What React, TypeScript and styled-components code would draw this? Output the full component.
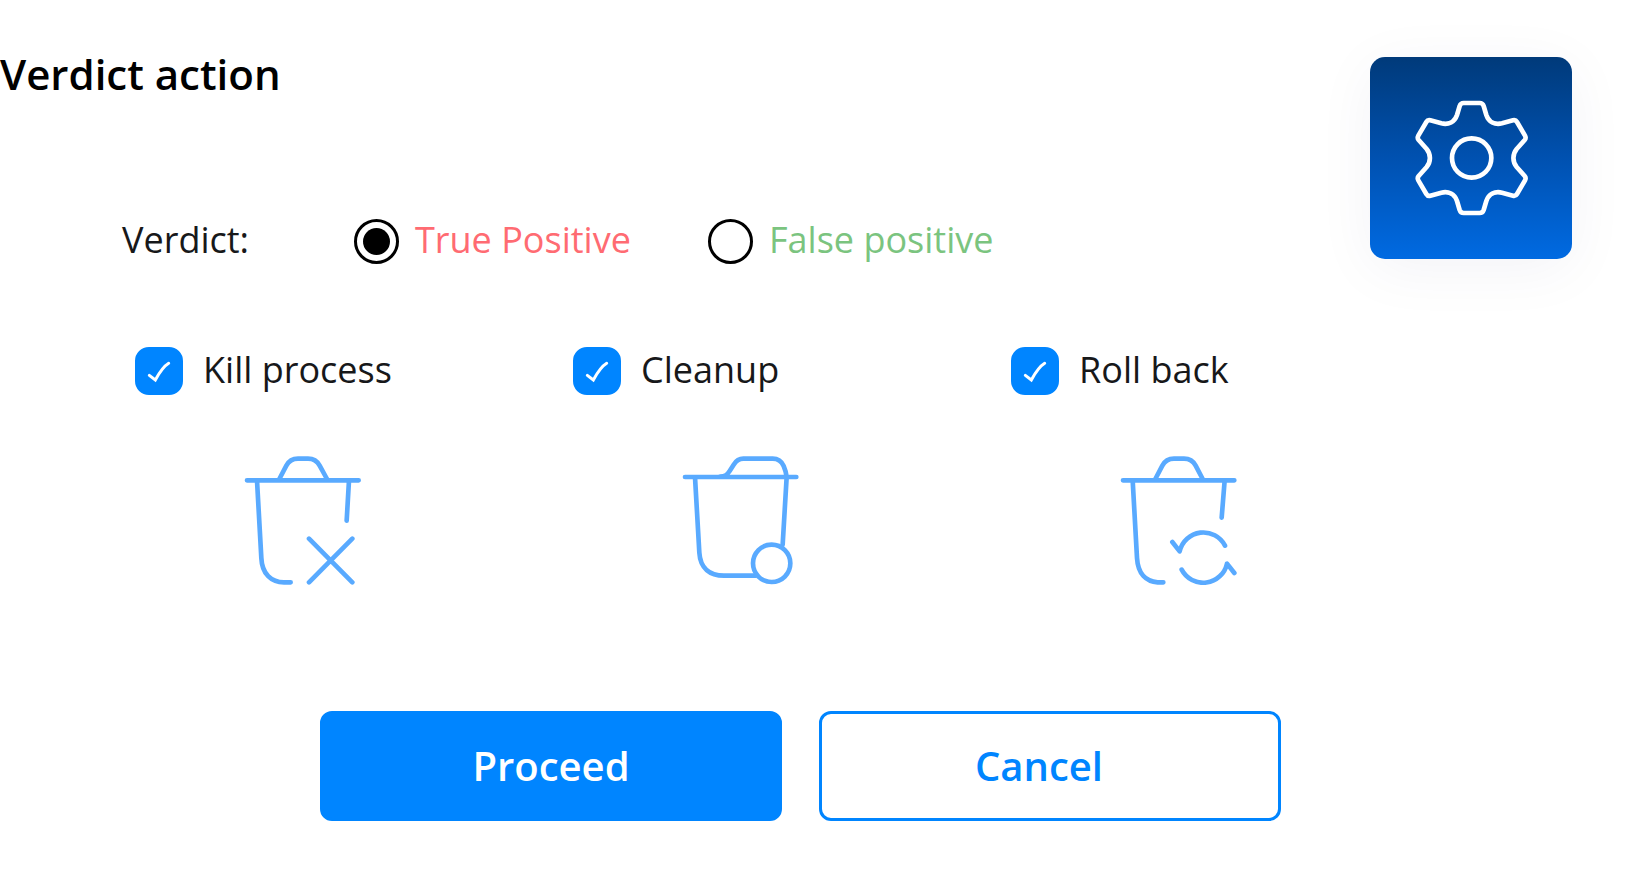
import React, { useState } from "react";
import styled, { createGlobalStyle } from "styled-components";

const GlobalStyle = createGlobalStyle`
  * { box-sizing: border-box; }
  body {
    margin: 0;
    background: #fff;
    color: #17181a;
    font-family: "Open Sans", "Noto Sans", sans-serif;
  }
`;

const Page = styled.form`
  display: flex;
  flex-direction: column;
  padding: 46px 0 48px;
`;

const Top = styled.div`
  display: flex;
  justify-content: space-between;
  align-items: flex-start;
  padding-right: 64px;
`;

const Intro = styled.div`
  display: flex;
  flex-direction: column;
  gap: 114px;
`;

const Title = styled.h1`
  margin: 0;
  font-size: 42px;
  line-height: 56px;
  font-weight: 600;
  color: #000;
`;

const VerdictGroup = styled.div`
  display: flex;
  align-items: center;
  padding-left: 122px;
`;

const Text = styled.span<{ $color?: string }>`
  padding-bottom: 2px;
  font-size: 36px;
  line-height: 48px;
  white-space: nowrap;
  color: ${(p) => p.$color ?? "inherit"};
`;

const GroupName = styled(Text)`
  width: 232px;
`;

const RadioLabel = styled.label`
  display: flex;
  align-items: center;
  gap: 16px;
  width: 354px;
  cursor: pointer;
`;

const Radio = styled.input`
  appearance: none;
  flex: none;
  display: grid;
  place-items: center;
  width: 45px;
  height: 45px;
  margin: 0;
  border: 3px solid #000;
  border-radius: 50%;

  &:checked::before {
    content: "";
    width: 27px;
    height: 27px;
    border-radius: 50%;
    background: #000;
  }
`;

const SettingsTile = styled.div`
  display: grid;
  place-items: center;
  flex: none;
  width: 202px;
  height: 202px;
  margin-top: 11px;
  border-radius: 15px;
  background: linear-gradient(#003a7a, #0050ae 48%, #006ae2);
  box-shadow: 0 10px 60px rgba(20, 20, 90, 0.05);
`;

const Actions = styled.div`
  display: grid;
  grid-template-columns: repeat(3, minmax(0, 1fr));
  gap: 102px;
  padding: 80px 289px 0 135px;
`;

const Action = styled.div`
  display: flex;
  flex-direction: column;
  gap: 60px;
`;

const CheckLabel = styled.label`
  display: flex;
  align-items: center;
  gap: 20px;
  cursor: pointer;
`;

const CheckBox = styled.span`
  display: grid;
  place-items: center;
  flex: none;
  width: 48px;
  height: 48px;

  > * { grid-area: 1 / 1; }
`;

const Check = styled.input`
  appearance: none;
  width: 48px;
  height: 48px;
  margin: 0;
  border: 3px solid #0085ff;
  border-radius: 14px;
  background: #fff;

  &:checked { background: #0085ff; }
`;

const Tick = styled.svg`
  z-index: 1;
  pointer-events: none;
`;

const ActionIcon = styled.svg`
  align-self: center;
  fill: none;
  stroke: #59aaff;
  stroke-width: 14;
  stroke-linecap: round;
  stroke-linejoin: round;
`;

const Buttons = styled.div`
  display: grid;
  grid-template-columns: repeat(2, minmax(0, 1fr));
  gap: 37px;
  padding: 126px 355px 0 320px;
`;

const Button = styled.button<{ $primary?: boolean }>`
  height: 110px;
  padding: ${(p) => (p.$primary ? "0 16px" : "0 38px 0 16px")};
  border: 3px solid #0085ff;
  border-radius: 12px;
  background: ${(p) => (p.$primary ? "#0085ff" : "#fff")};
  color: ${(p) => (p.$primary ? "#fff" : "#0085ff")};
  font-family: inherit;
  font-size: 40px;
  font-weight: 600;
  line-height: 48px;
  cursor: pointer;
`;

const Gear = () => (
  <svg width="116" height="118" viewBox="219 207 348 354" fill="none" stroke="#fff" strokeWidth="14" strokeLinejoin="round" aria-hidden="true">
    <path d="M371 219 H419 Q428 219 431 228 L439 255 C446 276 464 285 486 280 L519 271 Q527 269 531 276 L555 317 Q559 324 554 330 L530 357 C517 373 517 395 530 411 L554 438 Q559 444 555 451 L531 492 Q527 499 519 497 L486 488 C464 483 446 492 439 513 L431 540 Q428 549 419 549 H371 Q362 549 359 540 L351 513 C344 492 326 483 304 488 L271 497 Q263 499 259 492 L235 451 Q231 444 236 438 L260 411 C273 395 273 373 260 357 L236 330 Q231 324 235 317 L259 276 Q263 269 271 271 L304 280 C326 285 344 276 351 255 L359 228 Q362 219 371 219 Z" />
    <circle cx="395" cy="384" r="59" />
  </svg>
);

const KillIcon = () => (
  <ActionIcon width="119" height="129" viewBox="42 48 357 387" aria-hidden="true">
    <path d="M51 121 H386 M148 117 L169 77 Q180 56 204 56 H234 Q258 56 269 77 L291 117 M81 121 L94 354 C96 402 124 427 162 427 H182 M357 121 L350 242 M237 296 L367 427 M367 296 L237 427" />
  </ActionIcon>
);

const CleanupIcon = () => (
  <ActionIcon width="119" height="129" viewBox="36 48 357 387" aria-hidden="true">
    <path d="M45 111 H379 M150 110 C166 110 172 104 179 93 L191 74 Q202 56 220 56 H308 Q331 56 341 78 Q348 94 350 111 L338 314 M75 111 L88 338 C91 386 120 407 162 407 H257" />
    <circle cx="305" cy="370" r="56" />
  </ActionIcon>
);

const RollbackIcon = () => (
  <ActionIcon width="119" height="129" viewBox="45 48 357 387" aria-hidden="true">
    <path d="M54 121 H388 M151 117 L172 77 Q183 56 207 56 H237 Q261 56 272 77 L293 117 M83 121 L96 354 C99 402 124 425 158 427 H175 M359 121 L350 233 M202 306 L224 334 A73 73 0 0 1 360 317 M388 399 L366 371 A73 73 0 0 1 230 389" />
  </ActionIcon>
);

const VERDICTS = [
  { id: "true", label: "True Positive", color: "#ff6b72" },
  { id: "false", label: "False positive", color: "#7bc47f" },
];

const ACTIONS = [
  { id: "kill", label: "Kill process", Icon: KillIcon },
  { id: "cleanup", label: "Cleanup", Icon: CleanupIcon },
  { id: "rollback", label: "Roll back", Icon: RollbackIcon },
];

export default function App() {
  const [verdict, setVerdict] = useState("true");
  const [selected, setSelected] = useState(["kill", "cleanup", "rollback"]);

  const toggle = (id: string) =>
    setSelected((s) => (s.includes(id) ? s.filter((x) => x !== id) : [...s, id]));

  return (
    <>
      <GlobalStyle />
      <Page onSubmit={(e) => e.preventDefault()}>
        <Top>
          <Intro>
            <Title>Verdict action</Title>
            <VerdictGroup role="radiogroup" aria-labelledby="verdict-name">
              <GroupName id="verdict-name">Verdict:</GroupName>
              {VERDICTS.map((v) => (
                <RadioLabel key={v.id} htmlFor={v.id}>
                  <Radio
                    type="radio"
                    id={v.id}
                    name="verdict"
                    checked={verdict === v.id}
                    onChange={() => setVerdict(v.id)}
                  />
                  <Text $color={v.color}>{v.label}</Text>
                </RadioLabel>
              ))}
            </VerdictGroup>
          </Intro>
          <SettingsTile>
            <Gear />
          </SettingsTile>
        </Top>
        <Actions>
          {ACTIONS.map(({ id, label, Icon }) => (
            <Action key={id}>
              <CheckLabel htmlFor={id}>
                <CheckBox>
                  <Check type="checkbox" id={id} checked={selected.includes(id)} onChange={() => toggle(id)} />
                  <Tick width="48" height="48" viewBox="0 0 144 144" fill="none" stroke="#fff" strokeWidth="9" strokeLinecap="round" strokeLinejoin="miter" aria-hidden="true">
                    <path d="M43 85 L61 99 C72 79 86 58 101 49" />
                  </Tick>
                </CheckBox>
                <Text>{label}</Text>
              </CheckLabel>
              <Icon />
            </Action>
          ))}
        </Actions>
        <Buttons>
          <Button type="submit" $primary>Proceed</Button>
          <Button type="button">Cancel</Button>
        </Buttons>
      </Page>
    </>
  );
}
